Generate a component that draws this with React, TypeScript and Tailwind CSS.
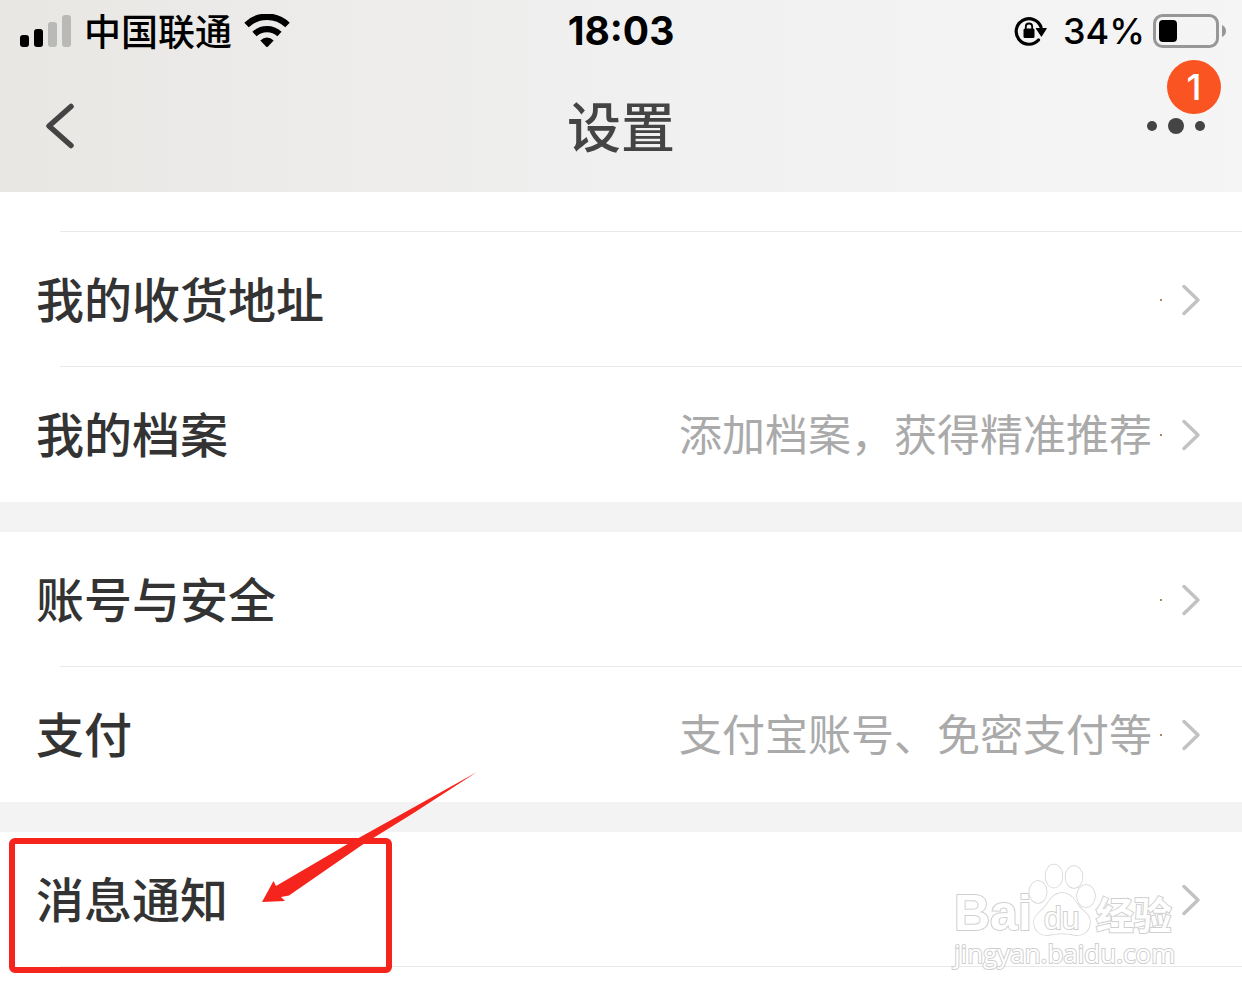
type Item = { label: string; hint?: string; dot?: boolean; marked?: boolean };

const groups: Item[][] = [
  [
    { label: "我的收货地址", dot: true },
    { label: "我的档案", hint: "添加档案，获得精准推荐", dot: true },
  ],
  [
    { label: "账号与安全", dot: true },
    { label: "支付", hint: "支付宝账号、免密支付等", dot: true },
  ],
  [{ label: "消息通知", marked: true }],
];

function Signal() {
  return (
    <svg width="52" height="32" viewBox="0 0 52 32" role="img" aria-label="信号">
      <rect x="0" y="20" width="9" height="12" rx="3" />
      <rect x="14" y="14" width="9" height="18" rx="3" />
      <rect x="28" y="7" width="9" height="25" rx="3" fill="#b9b9b8" />
      <rect x="42" y="0" width="9" height="32" rx="3" fill="#b9b9b8" />
    </svg>
  );
}

function Wifi() {
  return (
    <svg width="46" height="34" viewBox="0 0 46 34" role="img" aria-label="无线网络">
      <path d="M2.5 11 A 29.5 29.5 0 0 1 43.5 11" fill="none" stroke="#000" strokeWidth="6.4" />
      <path d="M10.5 20 A 18.5 18.5 0 0 1 35.5 20" fill="none" stroke="#000" strokeWidth="6.2" />
      <path d="M16.3 26.6 Q23 20.4 29.7 26.6 L24 32.6 Q23 33.6 22 32.6 Z" />
    </svg>
  );
}

function RotationLock() {
  return (
    <svg width="33" height="30" viewBox="0 0 33 30" role="img" aria-label="方向锁定">
      <path d="M24.5 24 A 12.8 12.8 0 1 1 27 11" fill="none" stroke="#000" strokeWidth="3.2" strokeLinecap="round" />
      <path d="M22.4 12.500 H32.2 L27.4 20 Z" stroke="#000" strokeWidth="1.2" strokeLinejoin="round" />
      <rect x="9.500" y="12.500" width="11" height="9.500" rx="1.500" />
      <path d="M11.8 14 V10.700 A 3.2 3.2 0 0 1 18.2 10.700 V14" fill="none" stroke="#000" strokeWidth="1.8" />
    </svg>
  );
}

function Battery() {
  return (
    <svg width="73" height="34" viewBox="0 0 73 34" role="img" aria-label="电池">
      <rect x="1.5" y="1.5" width="63" height="31" rx="8" fill="none" stroke="#979797" strokeWidth="3" />
      <rect x="6" y="6" width="18" height="22" rx="4" />
      <path d="M69 11 Q73 13 73 17 Q73 21 69 23 Z" fill="#979797" />
    </svg>
  );
}

function Header() {
  return (
    <header className="bg-linear-to-r from-[#e9e7e4] via-[#f0f0f0] to-[#f5f5f5]">
      <div className="grid h-[62px] grid-cols-[1fr_auto_1fr] items-center px-4 text-black">
        <div className="flex items-center gap-3 pl-1">
          <Signal />
          <span className="pb-0.5 text-[37px] leading-[40px] font-medium">中国联通</span>
          <Wifi />
        </div>
        <time className="font-['Inter'] text-[39px] leading-[40px] font-bold">18:03</time>
        <div className="flex items-center justify-end">
          <RotationLock />
          <span className="mr-2 ml-4 font-['Inter'] text-[36px] leading-[40px] font-medium">34%</span>
          <Battery />
        </div>
      </div>
      <div className="grid h-[130px] grid-cols-[1fr_auto_1fr] items-center px-9 pb-0.5">
        <button type="button" aria-label="返回" className="ml-2 w-8">
          <svg width="32" height="48" viewBox="0 0 32 48" fill="none" stroke="#444" strokeWidth="5.5" strokeLinecap="round" strokeLinejoin="round">
            <path d="M27 4.5 L5 24 L27 43.5" />
          </svg>
        </button>
        <h1 className="pb-0.5 text-[54px] leading-[64px] font-medium text-[#444]">设置</h1>
        <button type="button" aria-label="更多" className="relative mr-px flex items-center gap-[11px] justify-self-end">
          <span className="size-[10px] rounded-full bg-[#444]" />
          <span className="size-4 rounded-full bg-[#444]" />
          <span className="size-[10px] rounded-full bg-[#444]" />
          <span className="absolute -right-4 bottom-5 grid size-[54px] place-items-center rounded-full bg-[#fb5423] font-['Inter'] text-[36px] leading-[40px] font-medium text-white">
            1
          </span>
        </button>
      </div>
    </header>
  );
}

function Annotation() {
  return (
    <>
      <span className="pointer-events-none absolute top-[6px] left-[9px] h-[135px] w-[383px] rounded-md border-6 border-[#f5241c]" />
      <svg className="pointer-events-none absolute -top-[62px] left-[260px]" width="220" height="134" viewBox="0 0 220 134" aria-hidden="true">
        <path d="M217 2 L140 45 L86 75 L16 116 L13.5 111 L2 132 L25 131 L21 127 L29 125.500 L102 75 L152 44 Z" fill="#f5241c" />
      </svg>
    </>
  );
}

function Watermark() {
  return (
    <div className="pointer-events-none absolute top-[30px] right-[64px] flex w-[224px] flex-col text-white [-webkit-text-stroke:2px_#cfcfcf] [paint-order:stroke_fill]" aria-hidden="true">
      <div className="flex h-[78px] items-end">
        <span className="pb-1 font-['Liberation_Sans'] text-[50px] leading-[46px] font-bold">Bai</span>
        <span className="relative -ml-1 grid h-[78px] w-[68px] shrink-0 place-items-end">
          <svg className="absolute inset-0" width="68" height="78" viewBox="0 0 68 78" fill="#fff" stroke="#d4d4d4" strokeWidth="1.500">
            <ellipse cx="10" cy="30" rx="8.700" ry="11" />
            <ellipse cx="26" cy="14" rx="8.500" ry="11.500" />
            <ellipse cx="46" cy="15" rx="8.500" ry="11" />
            <ellipse cx="58" cy="34" rx="9" ry="11" />
            <path d="M34 31 C42 31 46 37 50 43 C54 49 62 52 62 60 C62 69 55 74 47 73 C38 71 30 71 21 73 C13 74 6 69 6 60 C6 52 15 49 19 42 C23 36 27 31 34 31 Z" />
          </svg>
          <span className="relative w-full pb-1 text-center font-['Liberation_Sans'] text-[32px] leading-[36px]">du</span>
        </span>
        <span className="pb-1 text-[38px] leading-[46px] font-bold">经验</span>
      </div>
      <span className="font-['Open_Sans'] text-[26px] leading-[26px]">jingyan.baidu.com</span>
    </div>
  );
}

function Row({ item }: { item: Item }) {
  return (
    <li className="relative">
      <a href="#" className="flex h-[135px] items-center justify-between pr-[41px] pl-9">
        <span className="pb-1.5 text-[48px] leading-[60px] font-medium text-[#333]">{item.label}</span>
        <span className="flex items-center">
          {item.hint && <span className="pb-1.5 text-[43px] leading-[54px] text-[#aaa]">{item.hint}</span>}
          {item.dot && <span className="mr-[19px] ml-2 size-[2px] bg-[#a98a5a]" />}
          <svg width="20" height="32" viewBox="0 0 20 32" fill="none" stroke="#c2c2c2" strokeWidth="3.5" strokeLinecap="round" strokeLinejoin="round" aria-hidden="true">
            <path d="M3 2.500 L17 16 L3 29.500" />
          </svg>
        </span>
      </a>
      {item.marked && (
        <>
          <Watermark />
          <Annotation />
        </>
      )}
    </li>
  );
}

function Divider() {
  return <li role="separator" className="-mt-px ml-[60px] h-px bg-[#e9e9e9]" />;
}

export default function App() {
  return (
    <div className="min-h-screen bg-white font-['Noto_Sans_CJK_SC',sans-serif]">
      <Header />
      <main className="pt-10">
        <nav aria-label="设置" className="flex flex-col gap-[30px] bg-[#f3f3f3]">
          {groups.map((group, index) => (
            <ul key={group[0].label} className="bg-white">
              {index === 0 && <Divider />}
              {group.map((item, position) => (
                <div key={item.label} className="contents">
                  <Row item={item} />
                  {(position < group.length - 1 || item.marked) && <Divider />}
                </div>
              ))}
            </ul>
          ))}
        </nav>
      </main>
    </div>
  );
}
